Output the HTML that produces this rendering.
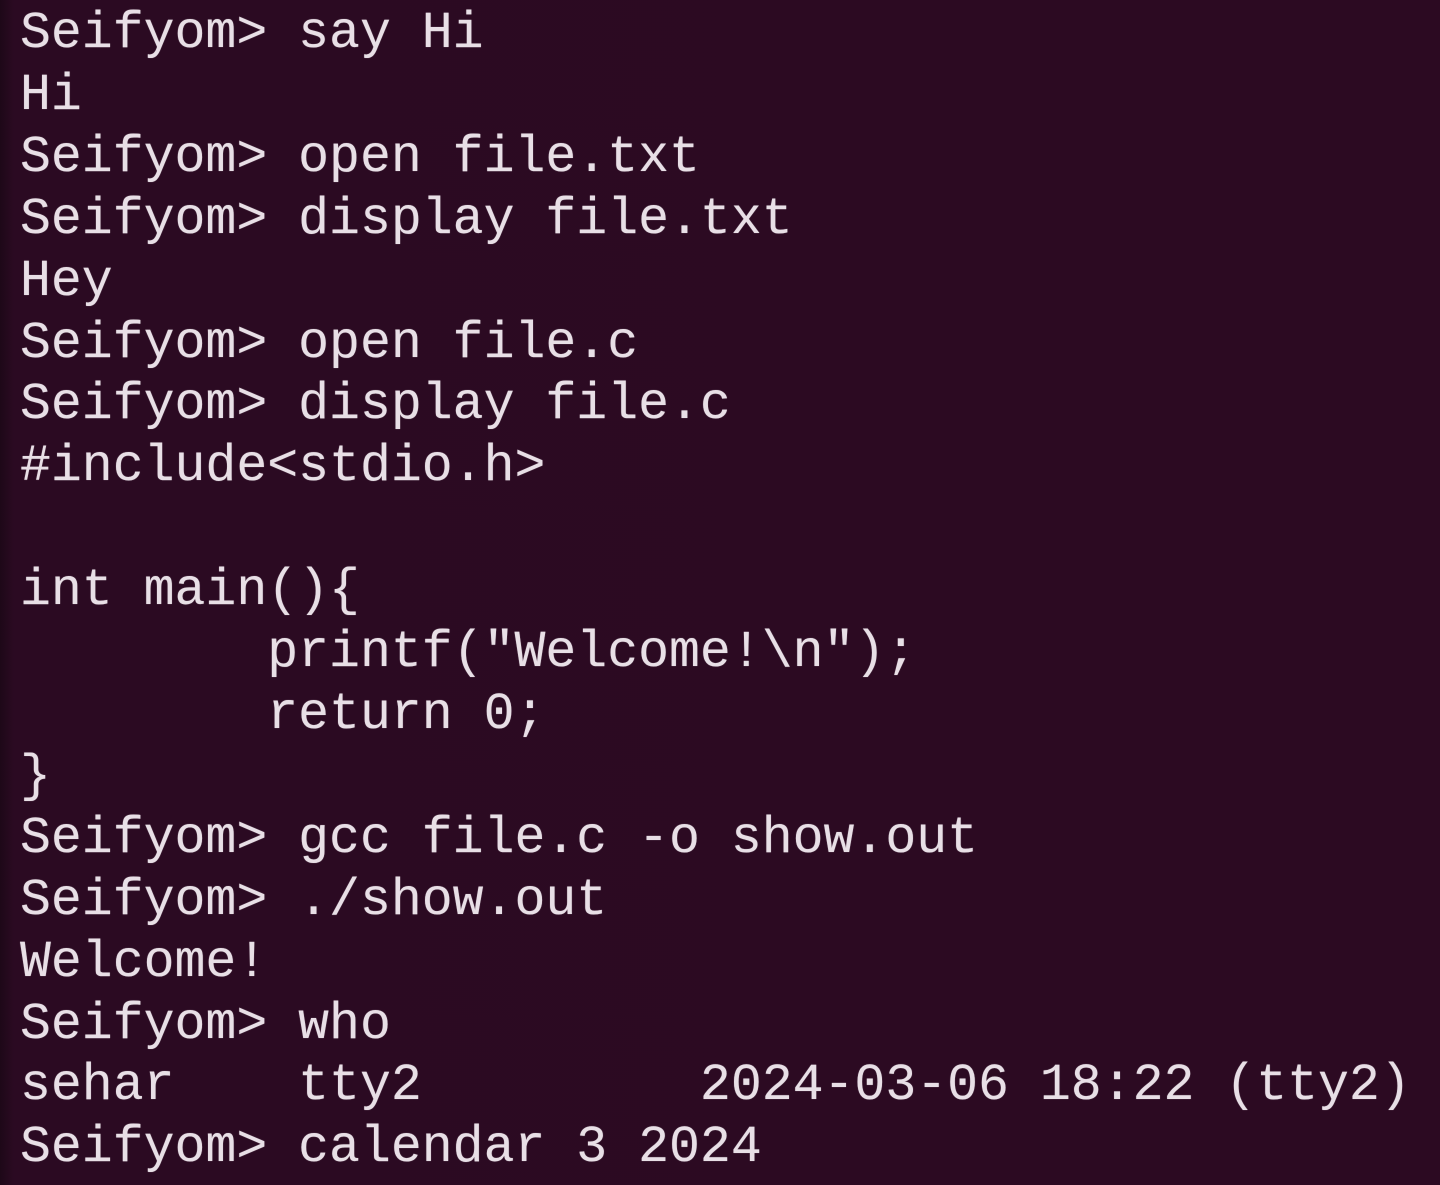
<!DOCTYPE html>
<html><head><meta charset="utf-8"><style>
html,body{margin:0;padding:0;width:1440px;height:1185px;overflow:hidden;background:#2c0a22;}
body{background:linear-gradient(90deg,#1e0818 0,#2b0a22 14px,#2c0a22 100%);}
pre{margin:0;padding:4px 0 0 20px;font-family:"Liberation Mono",monospace;font-size:51.5px;line-height:61.9px;color:#e8dfe6;white-space:pre;text-shadow:0 0 1px rgba(232,223,230,.5);}
</style></head><body><pre>Seifyom&gt; say Hi
Hi
Seifyom&gt; open file.txt
Seifyom&gt; display file.txt
Hey
Seifyom&gt; open file.c
Seifyom&gt; display file.c
#include&lt;stdio.h&gt;

int main(){
        printf("Welcome!\n");
        return 0;
}
Seifyom&gt; gcc file.c -o show.out
Seifyom&gt; ./show.out
Welcome!
Seifyom&gt; who
sehar    tty2         2024-03-06 18:22 (tty2)
Seifyom&gt; calendar 3 2024</pre></body></html>
